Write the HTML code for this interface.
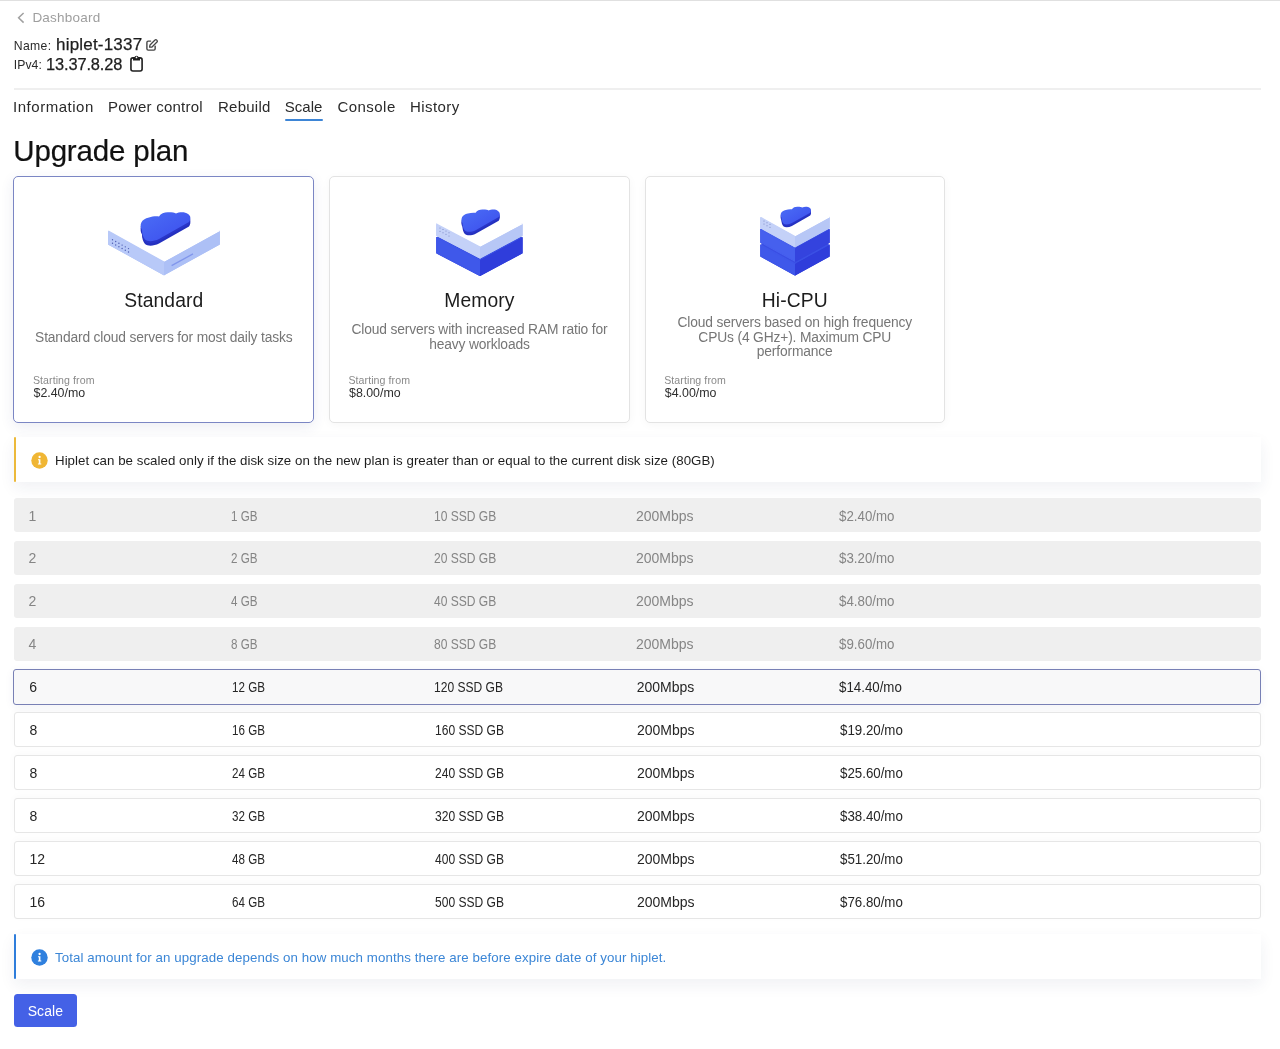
<!DOCTYPE html>
<html>
<head>
<meta charset="utf-8">
<style>
*{box-sizing:border-box;margin:0;padding:0}
html,body{width:1280px;height:1049px;overflow:hidden;background:#fff}
body{font-family:"Liberation Sans",sans-serif;color:#222;position:relative;will-change:transform}
.abs{position:absolute;white-space:nowrap}
.topline{position:absolute;left:0;top:0;width:1280px;height:1.2px;background:#e0e0e0}
.back{left:32.4px;top:10.3px;font-size:13.5px;color:#9e9e9e;line-height:16px;letter-spacing:.22px}
.chev{position:absolute;left:17px;top:11.6px}
.lbl{font-size:12.2px;color:#2a2a2a;letter-spacing:.15px}
.big{font-size:17px;color:#1e1e1e;-webkit-text-stroke:.25px #1e1e1e}
.hr{position:absolute;left:13.5px;top:88px;width:1247.5px;height:2px;background:#efefef}
.tab{top:98px;font-size:15px;line-height:18px;color:#2a2a2a;letter-spacing:.25px}
.uline{position:absolute;left:285px;top:119px;width:38px;height:2px;background:#3d85d6;border-radius:1px}
h1{position:absolute;left:13.3px;top:133.9px;font-size:29.5px;font-weight:normal;line-height:34px;color:#111;letter-spacing:-.18px;-webkit-text-stroke:.2px #111;white-space:nowrap}
.card{position:absolute;top:176.1px;width:300px;height:246.8px;border:1px solid #e3e3e3;border-radius:5px;background:#fff;box-shadow:0 2px 10px rgba(0,0,0,.035)}
.card.sel{border:1.5px solid #7b86c4;box-shadow:0 4px 14px rgba(40,50,120,.09)}
.ctitle{position:absolute;left:0;width:100%;text-align:center;font-size:19.3px;color:#1c1c1c;line-height:22px;letter-spacing:.1px}
.cdesc{position:absolute;left:0px;right:0px;text-align:center;font-size:13.8px;color:#767676;line-height:14.9px;letter-spacing:-.15px}
.csf{position:absolute;left:18.5px;top:196.6px;font-size:10.6px;color:#8a8a8a;line-height:12px;letter-spacing:.08px}
.cpr{position:absolute;left:19.1px;top:208.6px;font-size:12.4px;color:#2e2e2e;line-height:14px}
.illus{position:absolute;left:0;top:0;pointer-events:none}
.info{position:absolute;left:13.5px;width:1247px;height:45px;background:#fff;box-shadow:0 6px 16px rgba(30,40,90,.065)}
.info .bar{position:absolute;left:0;top:0;width:2.8px;height:100%}
.info .ic{position:absolute;left:17.5px;top:14.5px}
.info .tx{position:absolute;left:41.5px;top:16.1px;font-size:13.3px;line-height:16px;white-space:nowrap}
.row{position:absolute;left:13.5px;width:1247px;height:34.5px;border-radius:3px;font-size:14px;line-height:16px}
.row span{position:absolute;top:8.6px;white-space:nowrap;display:inline-block;transform-origin:0 50%}
.row .c2{transform:scaleX(.83)}
.row .c3{transform:scaleX(.86)}
.row .c5{transform:scaleX(.95)}
.row.dis{background:#efefef;color:#858585}
.row.dis span{top:9.8px}
.row.en{height:35px;background:#fff;border:1px solid #e6e6e6;color:#262626;box-shadow:0 -2px 8px rgba(0,0,0,.025)}
.row.sel{background:#f8f8f9;border:1.5px solid #7880b5;color:#262626;box-shadow:0 2px 10px rgba(40,50,120,.06)}
.row.en span{top:8.7px}
.row.sel span{top:9.1px}
.btn{position:absolute;left:13.8px;top:994.3px;width:63.2px;height:33.2px;background:#4461e6;border-radius:3.5px;color:#fff;font-size:14px;text-align:center;line-height:34px;letter-spacing:.1px}
</style>
</head>
<body>
<div class="topline"></div>
<svg class="chev" width="9" height="12" viewBox="0 0 9 12"><path d="M6.6 1 L1.6 5.8 L6.6 10.6" fill="none" stroke="#a0a0a0" stroke-width="1.5"/></svg>
<div class="abs back">Dashboard</div>

<div class="abs lbl" style="left:13.7px;top:39.3px;line-height:15px;letter-spacing:.4px">Name:</div>
<div class="abs big" style="left:56px;top:35.2px;line-height:20px;letter-spacing:.2px">hiplet-1337</div>
<svg class="abs" style="left:145px;top:38px" width="14" height="14" viewBox="0 0 14 14"><path d="M5.6 3.1 H3.2 Q1.9 3.1 1.9 4.4 V10.8 Q1.9 12.1 3.2 12.1 H8.9 Q10.15 12.1 10.15 10.8 V8.1" fill="none" stroke="#454545" stroke-width="1.4" stroke-linecap="round"/><path d="M4.6 9.2 L5 7 L10 2 A1.1 1.1 0 0 1 11.6 2 L12 2.4 A1.1 1.1 0 0 1 12 4 L7 9 Z" fill="none" stroke="#454545" stroke-width="1.3" stroke-linejoin="round"/></svg>
<div class="abs lbl" style="left:13.7px;top:58px;line-height:15px;letter-spacing:.1px">IPv4:</div>
<div class="abs big" style="left:46px;top:53.7px;line-height:20px;font-size:16.4px;letter-spacing:-.12px">13.37.8.28</div>
<svg class="abs" style="left:129px;top:54px" width="15" height="19" viewBox="0 0 15 19"><rect x="1.95" y="3.9" width="11.15" height="13.1" rx="2" fill="none" stroke="#1e1e1e" stroke-width="1.6"/><path d="M4 6.4 V4.1 Q4 3.6 4.5 3.6 H5.3 A2.25 2.25 0 0 1 9.7 3.6 H10.5 Q11 3.6 11 4.1 V6.4 Z" fill="#1e1e1e"/><circle cx="7.5" cy="3.4" r=".85" fill="#fff"/></svg>

<div class="hr"></div>
<div class="abs tab" style="left:13px;letter-spacing:.53px">Information</div>
<div class="abs tab" style="left:108px">Power control</div>
<div class="abs tab" style="left:218px">Rebuild</div>
<div class="abs tab" style="left:284.8px;letter-spacing:0px">Scale</div>
<div class="abs tab" style="left:337.5px;letter-spacing:.45px">Console</div>
<div class="abs tab" style="left:410px;letter-spacing:.42px">History</div>
<div class="uline"></div>

<h1>Upgrade plan</h1>

<div class="card sel" style="left:13.4px;width:300.8px;height:247.1px">
  <div class="ctitle" style="top:113px">Standard</div>
  <div class="cdesc" style="top:153.6px">Standard cloud servers for most daily tasks</div>
  <div class="csf">Starting from</div>
  <div class="cpr">$2.40/mo</div>
</div>
<div class="card" style="left:328.9px;width:301.1px">
  <div class="ctitle" style="top:113px">Memory</div>
  <div class="cdesc" style="top:146.4px">Cloud servers with increased RAM ratio for<br>heavy workloads</div>
  <div class="csf">Starting from</div>
  <div class="cpr">$8.00/mo</div>
</div>
<div class="card" style="left:644.7px;width:300.1px">
  <div class="ctitle" style="top:113px">Hi-CPU</div>
  <div class="cdesc" style="top:138.5px">Cloud servers based on high frequency<br>CPUs (4 GHz+). Maximum CPU<br>performance</div>
  <div class="csf">Starting from</div>
  <div class="cpr">$4.00/mo</div>
</div>
<!--ILLUS--><svg class="illus" width="1280" height="1049" viewBox="0 0 1280 1049"><defs><linearGradient id="cg" x1="0" y1="0" x2="1" y2="1"><stop offset="0" stop-color="#4b6ef6"/><stop offset="1" stop-color="#3b4cec"/></linearGradient><linearGradient id="dg" x1="0" y1="0" x2="1" y2="1"><stop offset="0" stop-color="#4660ee"/><stop offset="1" stop-color="#2a35d6"/></linearGradient></defs><polygon points="108.69999999999999,231.3 164,262.045 219.20000000000002,231.3 219.20000000000002,244.2 164,274.645 108.69999999999999,244.2" fill="#adc0f6" stroke="#adc0f6" stroke-width="1.2" stroke-linejoin="round"/><polygon points="108.1,231.3 164,200.555 219.8,231.3 164,262.045" fill="#ffffff"/><polygon points="108.69999999999999,231.3 164,262.045 164,274.645 108.69999999999999,244.2" fill="#b8c9f8" stroke="#b8c9f8" stroke-width="1.2" stroke-linejoin="round"/><polygon points="164,262.045 219.8,231.3 219.8,244.5 164,275.245" fill="#adc0f6"/><circle cx="112.50" cy="239.80" r="0.7" fill="#4d5db2"/><circle cx="115.70" cy="241.56" r="0.7" fill="#4d5db2"/><circle cx="118.90" cy="243.32" r="0.7" fill="#4d5db2"/><circle cx="122.10" cy="245.08" r="0.7" fill="#4d5db2"/><circle cx="125.30" cy="246.84" r="0.7" fill="#4d5db2"/><circle cx="128.50" cy="248.60" r="0.7" fill="#4d5db2"/><circle cx="112.50" cy="243.20" r="0.7" fill="#4d5db2"/><circle cx="115.70" cy="244.96" r="0.7" fill="#4d5db2"/><circle cx="118.90" cy="246.72" r="0.7" fill="#4d5db2"/><circle cx="122.10" cy="248.48" r="0.7" fill="#4d5db2"/><circle cx="125.30" cy="250.24" r="0.7" fill="#4d5db2"/><circle cx="128.50" cy="252.00" r="0.7" fill="#4d5db2"/><line x1="171.6" y1="265.6" x2="193" y2="253.9" stroke="#8196ec" stroke-width="1.3"/><g transform="translate(140,211.5) scale(1.0)"><path d="M 2 18.5 C -1 13.5 1 7.5 9 6 C 12 5 16 4.5 19 5 C 21 1.5 25 0.5 29 0.8 C 32 0.8 35 1.3 36 2 C 39 0.5 45 0 48 2.5 C 51 4.5 51 7.5 49 10.5 L 19 27.5 C 14 30 8 30.5 5 28 C 3 25.5 2 22.5 2 18.5 Z" transform="translate(0,4.6)" fill="#2430bf"/><path d="M 2 18.5 C -1 13.5 1 7.5 9 6 C 12 5 16 4.5 19 5 C 21 1.5 25 0.5 29 0.8 C 32 0.8 35 1.3 36 2 C 39 0.5 45 0 48 2.5 C 51 4.5 51 7.5 49 10.5 L 19 27.5 C 14 30 8 30.5 5 28 C 3 25.5 2 22.5 2 18.5 Z" transform="translate(0,2.3)" fill="#2935c8"/><path d="M 2 18.5 C -1 13.5 1 7.5 9 6 C 12 5 16 4.5 19 5 C 21 1.5 25 0.5 29 0.8 C 32 0.8 35 1.3 36 2 C 39 0.5 45 0 48 2.5 C 51 4.5 51 7.5 49 10.5 L 19 27.5 C 14 30 8 30.5 5 28 C 3 25.5 2 22.5 2 18.5 Z" fill="url(#cg)"/></g><polygon points="436.85,237.5 480,260.25 522.0,237.5 522.0,253.0 480,275.45 436.85,253.0" fill="#2f3ddb" stroke="#2f3ddb" stroke-width="1.2" stroke-linejoin="round"/><polygon points="436.25,237.5 480,214.75 522.6,237.5 480,260.25" fill="#3a4fe4"/><polygon points="436.85,237.5 480,260.25 480,275.45 436.85,253.0" fill="#3f58ea" stroke="#3f58ea" stroke-width="1.2" stroke-linejoin="round"/><polygon points="480,260.25 522.6,237.5 522.6,253.3 480,276.05" fill="#2f3ddb"/><polygon points="436.85,224.2 480,246.95 522.0,224.2 522.0,235.49999999999997 480,257.95 436.85,235.49999999999997" fill="#b7c7f6" stroke="#b7c7f6" stroke-width="1.2" stroke-linejoin="round"/><polygon points="436.25,224.2 480,201.45 522.6,224.2 480,246.95" fill="#ffffff"/><polygon points="436.85,224.2 480,246.95 480,257.95 436.85,235.49999999999997" fill="#c4d1f8" stroke="#c4d1f8" stroke-width="1.2" stroke-linejoin="round"/><polygon points="480,246.95 522.6,224.2 522.6,235.79999999999998 480,258.55" fill="#b7c7f6"/><circle cx="440.00" cy="228.00" r="0.5" fill="#6c7ab8"/><circle cx="443.00" cy="229.56" r="0.5" fill="#6c7ab8"/><circle cx="446.00" cy="231.12" r="0.5" fill="#6c7ab8"/><circle cx="449.00" cy="232.68" r="0.5" fill="#6c7ab8"/><circle cx="440.00" cy="231.20" r="0.5" fill="#6c7ab8"/><circle cx="443.00" cy="232.76" r="0.5" fill="#6c7ab8"/><circle cx="446.00" cy="234.32" r="0.5" fill="#6c7ab8"/><circle cx="449.00" cy="235.88" r="0.5" fill="#6c7ab8"/><g transform="translate(461,209) scale(0.77)"><path d="M 2 18.5 C -1 13.5 1 7.5 9 6 C 12 5 16 4.5 19 5 C 21 1.5 25 0.5 29 0.8 C 32 0.8 35 1.3 36 2 C 39 0.5 45 0 48 2.5 C 51 4.5 51 7.5 49 10.5 L 19 27.5 C 14 30 8 30.5 5 28 C 3 25.5 2 22.5 2 18.5 Z" transform="translate(0,4.6)" fill="#2430bf"/><path d="M 2 18.5 C -1 13.5 1 7.5 9 6 C 12 5 16 4.5 19 5 C 21 1.5 25 0.5 29 0.8 C 32 0.8 35 1.3 36 2 C 39 0.5 45 0 48 2.5 C 51 4.5 51 7.5 49 10.5 L 19 27.5 C 14 30 8 30.5 5 28 C 3 25.5 2 22.5 2 18.5 Z" transform="translate(0,2.3)" fill="#2935c8"/><path d="M 2 18.5 C -1 13.5 1 7.5 9 6 C 12 5 16 4.5 19 5 C 21 1.5 25 0.5 29 0.8 C 32 0.8 35 1.3 36 2 C 39 0.5 45 0 48 2.5 C 51 4.5 51 7.5 49 10.5 L 19 27.5 C 14 30 8 30.5 5 28 C 3 25.5 2 22.5 2 18.5 Z" fill="url(#cg)"/></g><polygon points="760.9,245 795,264.08500000000004 829.1,245 829.1,256.2 795,274.985 760.9,256.2" fill="#2f3ddb" stroke="#2f3ddb" stroke-width="1.2" stroke-linejoin="round"/><polygon points="760.3,245 795,225.91499999999996 829.7,245 795,264.08500000000004" fill="#3a4fe4"/><polygon points="760.9,245 795,264.08500000000004 795,274.985 760.9,256.2" fill="#3f58ea" stroke="#3f58ea" stroke-width="1.2" stroke-linejoin="round"/><polygon points="795,264.08500000000004 829.7,245 829.7,256.5 795,275.58500000000004" fill="#2f3ddb"/><polygon points="760.9,229.4 795,248.48500000000004 829.1,229.4 829.1,242.5 795,261.285 760.9,242.5" fill="#3443de" stroke="#3443de" stroke-width="1.2" stroke-linejoin="round"/><polygon points="760.3,229.4 795,210.31499999999997 829.7,229.4 795,248.48500000000004" fill="#3a4fe4"/><polygon points="760.9,229.4 795,248.48500000000004 795,261.285 760.9,242.5" fill="#4660ee" stroke="#4660ee" stroke-width="1.2" stroke-linejoin="round"/><polygon points="795,248.48500000000004 829.7,229.4 829.7,242.8 795,261.88500000000005" fill="#3443de"/><polygon points="760.9,217.5 795,236.58500000000004 829.1,217.5 829.1,227.89999999999998 795,246.68500000000003 760.9,227.89999999999998" fill="#b7c7f6" stroke="#b7c7f6" stroke-width="1.2" stroke-linejoin="round"/><polygon points="760.3,217.5 795,198.41499999999996 829.7,217.5 795,236.58500000000004" fill="#ffffff"/><polygon points="760.9,217.5 795,236.58500000000004 795,246.68500000000003 760.9,227.89999999999998" fill="#c4d1f8" stroke="#c4d1f8" stroke-width="1.2" stroke-linejoin="round"/><polygon points="795,236.58500000000004 829.7,217.5 829.7,228.2 795,247.28500000000003" fill="#b7c7f6"/><circle cx="764.00" cy="221.00" r="0.5" fill="#6c7ab8"/><circle cx="767.00" cy="222.65" r="0.5" fill="#6c7ab8"/><circle cx="770.00" cy="224.30" r="0.5" fill="#6c7ab8"/><circle cx="764.00" cy="224.00" r="0.5" fill="#6c7ab8"/><circle cx="767.00" cy="225.65" r="0.5" fill="#6c7ab8"/><circle cx="770.00" cy="227.30" r="0.5" fill="#6c7ab8"/><g transform="translate(780.3,206.3) scale(0.61)"><path d="M 2 18.5 C -1 13.5 1 7.5 9 6 C 12 5 16 4.5 19 5 C 21 1.5 25 0.5 29 0.8 C 32 0.8 35 1.3 36 2 C 39 0.5 45 0 48 2.5 C 51 4.5 51 7.5 49 10.5 L 19 27.5 C 14 30 8 30.5 5 28 C 3 25.5 2 22.5 2 18.5 Z" transform="translate(0,4.6)" fill="#2430bf"/><path d="M 2 18.5 C -1 13.5 1 7.5 9 6 C 12 5 16 4.5 19 5 C 21 1.5 25 0.5 29 0.8 C 32 0.8 35 1.3 36 2 C 39 0.5 45 0 48 2.5 C 51 4.5 51 7.5 49 10.5 L 19 27.5 C 14 30 8 30.5 5 28 C 3 25.5 2 22.5 2 18.5 Z" transform="translate(0,2.3)" fill="#2935c8"/><path d="M 2 18.5 C -1 13.5 1 7.5 9 6 C 12 5 16 4.5 19 5 C 21 1.5 25 0.5 29 0.8 C 32 0.8 35 1.3 36 2 C 39 0.5 45 0 48 2.5 C 51 4.5 51 7.5 49 10.5 L 19 27.5 C 14 30 8 30.5 5 28 C 3 25.5 2 22.5 2 18.5 Z" fill="url(#cg)"/></g></svg><!--/ILLUS-->

<div class="info" style="top:437.3px">
  <div class="bar" style="background:#ecb93a;border-radius:1.5px"></div>
  <svg class="ic" width="17" height="17" viewBox="0 0 17 17"><circle cx="8.5" cy="8.5" r="8.2" fill="#f0b634"/><circle cx="8.6" cy="5" r="1.15" fill="#fff"/><path d="M7 7.3 H9.4 V11.6 H10.3 V12.6 H6.9 V11.6 H7.8 V8.3 H7 Z" fill="#fff"/></svg>
  <div class="tx" style="color:#1e1e1e;letter-spacing:.03px">Hiplet can be scaled only if the disk size on the new plan is greater than or equal to the current disk size (80GB)</div>
</div>

<div class="row dis" style="top:497.80px"><span class="c1" style="left:15.0px">1</span><span class="c2" style="left:217.5px">1 GB</span><span class="c3" style="left:420.0px">10 SSD GB</span><span class="c4" style="left:622.5px">200Mbps</span><span class="c5" style="left:825.0px">$2.40/mo</span></div>
<div class="row dis" style="top:540.70px"><span class="c1" style="left:15.0px">2</span><span class="c2" style="left:217.5px">2 GB</span><span class="c3" style="left:420.0px">20 SSD GB</span><span class="c4" style="left:622.5px">200Mbps</span><span class="c5" style="left:825.0px">$3.20/mo</span></div>
<div class="row dis" style="top:583.60px"><span class="c1" style="left:15.0px">2</span><span class="c2" style="left:217.5px">4 GB</span><span class="c3" style="left:420.0px">40 SSD GB</span><span class="c4" style="left:622.5px">200Mbps</span><span class="c5" style="left:825.0px">$4.80/mo</span></div>
<div class="row dis" style="top:626.50px"><span class="c1" style="left:15.0px">4</span><span class="c2" style="left:217.5px">8 GB</span><span class="c3" style="left:420.0px">80 SSD GB</span><span class="c4" style="left:622.5px">200Mbps</span><span class="c5" style="left:825.0px">$9.60/mo</span></div>
<div class="row sel" style="top:668.95px;height:35.95px;left:13.25px;width:1247.8px"><span class="c1" style="left:15.0px">6</span><span class="c2" style="left:217.5px">12 GB</span><span class="c3" style="left:420.0px">120 SSD GB</span><span class="c4" style="left:622.5px">200Mbps</span><span class="c5" style="left:825.0px">$14.40/mo</span></div>
<div class="row en" style="top:712.30px"><span class="c1" style="left:15.0px">8</span><span class="c2" style="left:217.5px">16 GB</span><span class="c3" style="left:420.0px">160 SSD GB</span><span class="c4" style="left:622.5px">200Mbps</span><span class="c5" style="left:825.0px">$19.20/mo</span></div>
<div class="row en" style="top:755.20px"><span class="c1" style="left:15.0px">8</span><span class="c2" style="left:217.5px">24 GB</span><span class="c3" style="left:420.0px">240 SSD GB</span><span class="c4" style="left:622.5px">200Mbps</span><span class="c5" style="left:825.0px">$25.60/mo</span></div>
<div class="row en" style="top:798.10px"><span class="c1" style="left:15.0px">8</span><span class="c2" style="left:217.5px">32 GB</span><span class="c3" style="left:420.0px">320 SSD GB</span><span class="c4" style="left:622.5px">200Mbps</span><span class="c5" style="left:825.0px">$38.40/mo</span></div>
<div class="row en" style="top:841.00px"><span class="c1" style="left:15.0px">12</span><span class="c2" style="left:217.5px">48 GB</span><span class="c3" style="left:420.0px">400 SSD GB</span><span class="c4" style="left:622.5px">200Mbps</span><span class="c5" style="left:825.0px">$51.20/mo</span></div>
<div class="row en" style="top:883.90px"><span class="c1" style="left:15.0px">16</span><span class="c2" style="left:217.5px">64 GB</span><span class="c3" style="left:420.0px">500 SSD GB</span><span class="c4" style="left:622.5px">200Mbps</span><span class="c5" style="left:825.0px">$76.80/mo</span></div>

<div class="info" style="top:934px">
  <div class="bar" style="background:#2e7ddb;border-radius:1.5px"></div>
  <svg class="ic" width="17" height="17" viewBox="0 0 17 17"><circle cx="8.5" cy="8.5" r="8.2" fill="#2f80de"/><circle cx="8.6" cy="5" r="1.15" fill="#fff"/><path d="M7 7.3 H9.4 V11.6 H10.3 V12.6 H6.9 V11.6 H7.8 V8.3 H7 Z" fill="#fff"/></svg>
  <div class="tx" style="color:#3b86d6;letter-spacing:.09px">Total amount for an upgrade depends on how much months there are before expire date of your hiplet.</div>
</div>

<div class="btn">Scale</div>
</body>
</html>
